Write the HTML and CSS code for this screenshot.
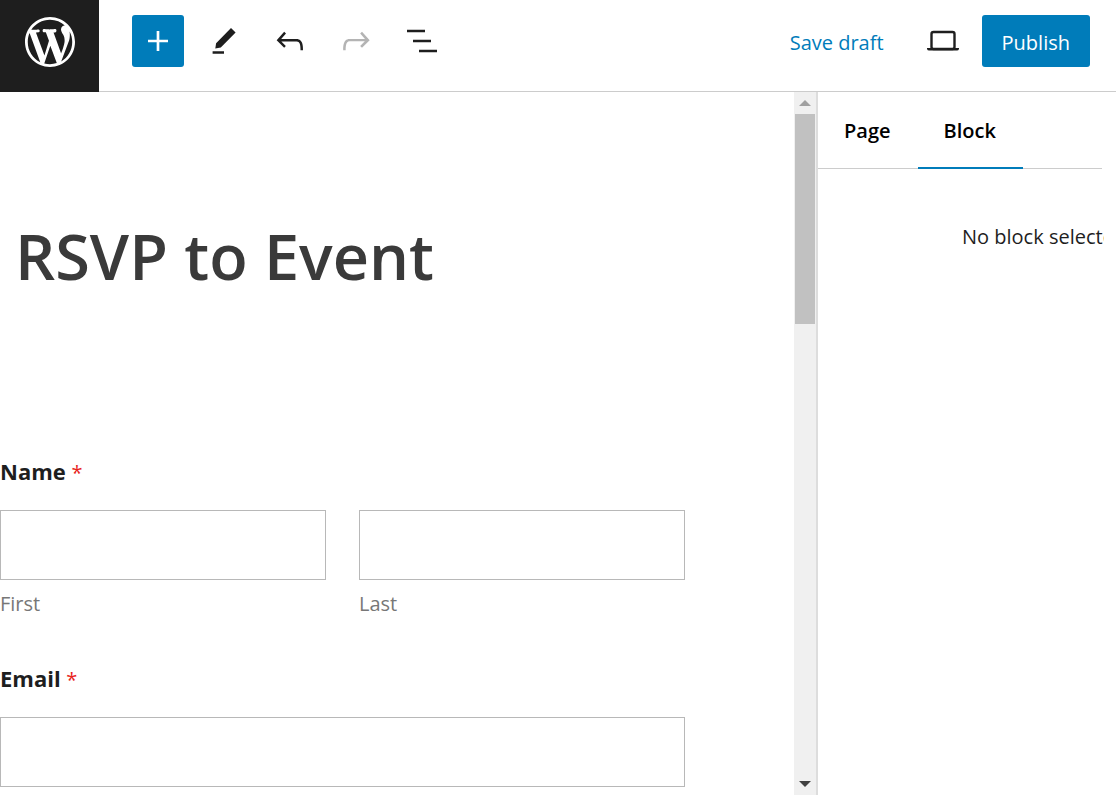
FILE: index.html
```html
<!DOCTYPE html>
<html lang="en">
  <head>
    <meta charset="UTF-8"/>
    <meta name="viewport" content="width=device-width"/>
    <title>RSVP to Event</title>
    <link rel="stylesheet" href="styles.css">
  </head>
  <body>
    <header class="header">
      <a class="logo" href="#" aria-label="View pages">
        <svg viewBox="0 0 20 20" width="50" height="50" fill="currentColor"><path d="M20 10c0-5.51-4.49-10-10-10C4.48 0 0 4.49 0 10c0 5.52 4.48 10 10 10 5.51 0 10-4.48 10-10zM7.78 15.37L4.37 6.22c.55-.02 1.17-.08 1.17-.08.5-.06.44-1.13-.06-1.11 0 0-1.45.11-2.37.11-.18 0-.37 0-.58-.01C4.12 2.69 6.87 1.11 10 1.11c2.33 0 4.45.87 6.05 2.34-.68-.11-1.65.39-1.65 1.58 0 .74.45 1.36.9 2.1.35.61.55 1.36.55 2.46 0 1.49-1.4 5-1.4 5l-3.03-8.37c.54-.02.82-.17.82-.17.5-.05.44-1.25-.06-1.22 0 0-1.44.12-2.38.12-.87 0-2.33-.12-2.33-.12-.5-.03-.56 1.2-.06 1.22l.92.08 1.26 3.41zM17.41 10c.24-.64.74-1.87.43-4.25.7 1.29 1.05 2.71 1.05 4.25 0 3.29-1.73 6.24-4.4 7.78.97-2.59 1.94-5.2 2.92-7.78zM6.1 18.09C3.12 16.65 1.11 13.53 1.11 10c0-1.3.23-2.48.72-3.59C3.25 10.3 4.67 14.2 6.1 18.09zm4.03-6.63l2.58 6.98c-.86.29-1.76.45-2.71.45-.79 0-1.57-.11-2.29-.33.81-2.38 1.62-4.74 2.42-7.1z"/></svg>
      </a>
      <div class="toolbar">
        <div class="tools">
          <button class="tool add" type="button" aria-label="Add block">
            <svg viewBox="0 0 24 24" width="40" height="40" fill="currentColor"><path d="M18 11.2h-5.2V6h-1.6v5.2H6v1.6h5.2V18h1.6v-5.2H18z"/></svg>
          </button>
          <button class="tool" type="button" aria-label="Tools">
            <svg viewBox="0 0 40 40" width="40" height="40" fill="currentColor"><path d="M11.3 27.6l.8-5.3L27 7l4.6 4.5L16.8 26.4zM8.6 30.2H20v2.5H8.6z"/></svg>
          </button>
          <button class="tool" type="button" aria-label="Undo">
            <svg viewBox="0 0 24 24" width="40" height="40" fill="currentColor"><path d="M18.3 11.7c-.6-.6-1.4-.9-2.3-.9H6.7l2.9-3.3-1.1-1-4.5 5L8.5 16l1-1-2.7-2.7H16c.5 0 .9.2 1.3.5 1 1 1 3.4 1 4.5v.3h1.5v-.2c0-1.5 0-4.3-1.5-5.7z"/></svg>
          </button>
          <button class="tool" type="button" aria-label="Redo" disabled>
            <svg viewBox="0 0 24 24" width="40" height="40" fill="currentColor"><path d="M15.6 6.5l-1.1 1 2.9 3.3H8c-.9 0-1.7.3-2.3.9-1.4 1.5-1.4 4.2-1.4 5.6v.2h1.5v-.3c0-1.1 0-3.5 1-4.5.3-.3.7-.5 1.3-.5h9.2L14.5 15l1.1 1.1 4.6-4.6-4.6-5z"/></svg>
          </button>
          <button class="tool" type="button" aria-label="List view">
            <svg viewBox="0 0 24 24" width="40" height="40" fill="currentColor"><path d="M13.8 5.2H3v1.5h10.8V5.2zm-3.6 12v1.5H21v-1.5H10.2zm7.2-6H6.6v1.5h10.8v-1.5z"/></svg>
          </button>
        </div>
        <div class="actions">
          <button class="save" type="button">Save draft</button>
          <button class="tool" type="button" aria-label="Preview">
            <svg viewBox="0 0 40 40" width="40" height="40"><rect x="8.5" y="11" width="23" height="17" rx="2" fill="none" stroke="currentColor" stroke-width="2.4"/><path d="M4 27h32v1q-.5 1.6-2 1.6H6Q4.5 29.6 4 28z" fill="currentColor"/></svg>
          </button>
          <button class="publish" type="button">Publish</button>
        </div>
      </div>
    </header>
    <div class="editor">
      <main class="canvas">
        <h1 class="title">RSVP to Event</h1>
        <form class="form">
          <fieldset class="field">
            <legend class="label">Name <span class="required">*</span></legend>
            <div class="columns">
              <div class="column">
                <input class="input" type="text" id="first"/>
                <label class="sublabel" for="first">First</label>
              </div>
              <div class="column">
                <input class="input" type="text" id="last"/>
                <label class="sublabel" for="last">Last</label>
              </div>
            </div>
          </fieldset>
          <div class="field">
            <label class="label" for="email">Email <span class="required">*</span></label>
            <input class="input" type="email" id="email"/>
          </div>
        </form>
      </main>
      <div class="scrollbar">
        <span class="arrow up"></span>
        <span class="thumb"></span>
        <span class="arrow down"></span>
      </div>
      <aside class="sidebar">
        <div class="tabs">
          <button class="tab" type="button">Page</button>
          <button class="tab active" type="button">Block</button>
        </div>
        <p class="empty">No block selected.</p>
      </aside>
    </div>
  </body>
</html>
```
FILE: styles.css
```css
* {
  box-sizing: border-box;
}

body {
  margin: 0;
  height: 100vh;
  display: flex;
  flex-direction: column;
  overflow: hidden;
  background-color: #fff;
  color: #1e1e1e;
  font-family: "Segoe UI", "Open Sans", sans-serif;
  font-size: 20px;
  line-height: 28px;
}

button {
  border: 0;
  padding: 0;
  background: none;
  color: inherit;
  font: inherit;
}

svg {
  display: block;
}

.header {
  display: flex;
  flex-shrink: 0;
  height: 92px;
}

.logo {
  display: flex;
  align-items: center;
  justify-content: center;
  width: 99px;
  padding-bottom: 8px;
  background-color: #1e1e1e;
  color: #fff;
}

.toolbar {
  flex: 1;
  display: flex;
  align-items: flex-start;
  justify-content: space-between;
  padding: 15px 26px 0 33px;
  border-bottom: 1px solid #ccc;
}

.tools,
.actions {
  display: flex;
  align-items: center;
  gap: 14px;
}

.tool {
  display: flex;
  align-items: center;
  justify-content: center;
  width: 52px;
  height: 52px;
}

.tool:disabled {
  color: #b4b4b4;
}

.add,
.publish {
  border-radius: 3px;
  background-color: #007cba;
  color: #fff;
}

.save {
  margin-right: 20px;
  padding-top: 3px;
  color: #007cba;
}

.actions {
  gap: 13px;
}

.publish {
  height: 52px;
  padding: 3px 20px 0;
}

.editor {
  flex: 1;
  display: flex;
  min-height: 0;
}

.canvas {
  flex: 1;
  min-width: 0;
  overflow: hidden;
}

.title {
  margin: 120px 0 0 15px;
  color: #3a3a3a;
  font-size: 63px;
  font-weight: 600;
  line-height: 88px;
}

.form {
  margin: 157px 109px 0 0;
}

.field {
  margin: 0 0 46px;
  border: 0;
  padding: 0;
}

.label {
  display: block;
  margin-bottom: 23px;
  padding: 0;
  font-size: 22px;
  font-weight: 700;
}

.required {
  color: #e8241c;
  font-size: 20px;
  font-weight: 400;
}

.columns {
  display: flex;
  gap: 33px;
}

.column {
  flex: 1;
}

.input {
  display: block;
  width: 100%;
  height: 70px;
  border: 1px solid #b8b8b8;
  padding: 0 16px;
  background-color: #fff;
  font: inherit;
}

.sublabel {
  display: block;
  margin-top: 10px;
  color: #777;
}

.scrollbar {
  display: flex;
  flex-direction: column;
  align-items: center;
  width: 22px;
  padding: 2px 0;
  background-color: #f0f0f0;
}

.arrow {
  border: 6px solid transparent;
}

.up {
  margin-bottom: 8px;
  border-bottom-color: #a0a0a0;
}

.down {
  margin-top: auto;
  border-top-color: #404040;
}

.thumb {
  width: 20px;
  height: 30%;
  background-color: #c1c1c1;
}

.sidebar {
  width: 300px;
  border-left: 2px solid #ddd;
  padding-right: 12px;
  overflow: hidden;
}

.tabs {
  display: flex;
  margin-right: 2px;
  box-shadow: inset 0 -1px #ccc;
}

.tab {
  height: 77px;
  padding: 0 27px 0 26px;
  color: #000;
  font-weight: 600;
}

.active {
  border-bottom: 2px solid #007cba;
  padding-top: 2px;
}

/* long text is cut at the panel edge */
.empty {
  margin: 54px 0 0;
  padding-left: 144px;
  overflow: hidden;
  white-space: nowrap;
}
```
